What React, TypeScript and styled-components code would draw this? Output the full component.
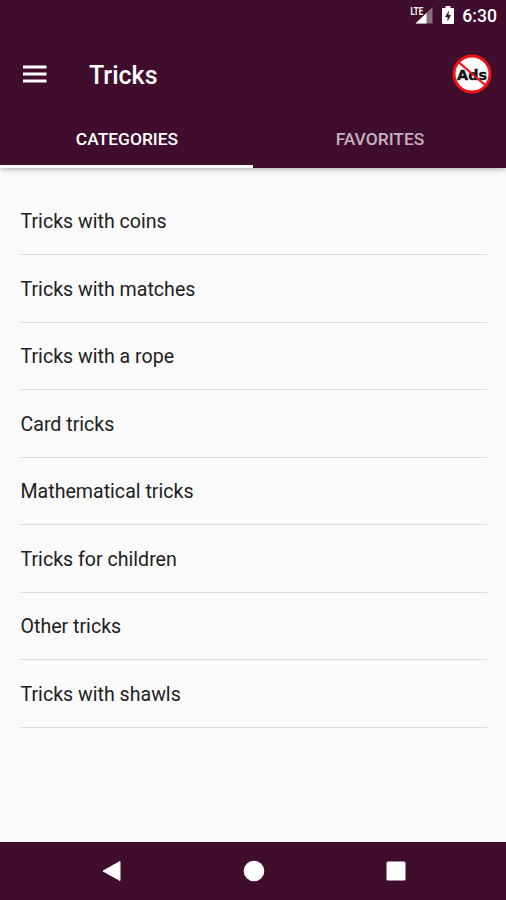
import React from "react";
import styled, { createGlobalStyle } from "styled-components";

const PLUM = "#400e2c";

const GlobalStyle = createGlobalStyle`
  * { box-sizing: border-box; }
  body { margin: 0; background: #fafafa; font-family: Roboto, "Liberation Sans", sans-serif; }
`;

const Screen = styled.div`
  display: flex;
  flex-direction: column;
  width: 506px;
  height: 900px;
  overflow: hidden;
  background: #fafafa;
`;

const Header = styled.header`
  flex: none;
  height: 168px;
  background: ${PLUM};
  box-shadow: 0 1px 6px rgba(0, 0, 0, 0.32);
`;

const StatusBar = styled.div`
  display: flex;
  align-items: center;
  justify-content: flex-end;
  height: 32px;
  padding-right: 9px;
  color: #fff;
`;

const SignalIcon = styled.svg`
  width: 24px;
  height: 22px;
  margin-right: 8px;
`;

const BatteryIcon = styled.svg`
  width: 12px;
  height: 18px;
  margin: -2px 8px 0 0;
`;

const Clock = styled.span`
  font-size: 17.6px;
  font-weight: 500;
  line-height: 32px;
`;

const Toolbar = styled.div`
  display: flex;
  align-items: center;
  height: 84px;
  padding: 0 14px 0 23px;
`;

const IconButton = styled.button`
  display: flex;
  padding: 0;
  border: 0;
  background: none;
  cursor: pointer;
`;

const Title = styled.h1`
  flex: 1;
  margin: 3px 0 0 42px;
  color: #fff;
  font-size: 25px;
  font-weight: 500;
  line-height: 32px;
`;

const Tabs = styled.nav`
  display: flex;
  height: 52px;
`;

const Tab = styled.button<{ $active?: boolean }>`
  flex: 1;
  padding: 0 0 3px 1px;
  border: 0;
  border-bottom: 3px solid ${(p) => (p.$active ? "#fff" : "transparent")};
  background: none;
  color: ${(p) => (p.$active ? "#fff" : "#c2b1bb")};
  font: 500 17.4px/44px Roboto, sans-serif;
  cursor: pointer;
`;

const List = styled.ul`
  flex: 1;
  margin: 0;
  padding: 19.5px 19px 0 20px;
  list-style: none;
`;

const Row = styled.li`
  display: flex;
  align-items: center;
  height: 67.5px;
  padding: 2px 0 0 0.5px;
  border-bottom: 1.5px solid #dcdcdc;
  color: #212121;
  font-size: 19.6px;
`;

const NavBar = styled.footer`
  display: grid;
  grid-template-columns: 142px 142px 142px;
  justify-content: center;
  align-items: center;
  justify-items: center;
  flex: none;
  height: 58px;
  padding: 0 0 1px 1px;
  background: ${PLUM};
  border-top: 1px solid #2b061d;
`;

const categories = [
  "Tricks with coins",
  "Tricks with matches",
  "Tricks with a rope",
  "Card tricks",
  "Mathematical tricks",
  "Tricks for children",
  "Other tricks",
  "Tricks with shawls",
];

export default function App() {
  return (
    <Screen>
      <GlobalStyle />
      <Header>
        <StatusBar>
          <SignalIcon viewBox="0 0 24 22">
            <path d="M22.500 2V18.500H5.500Z" fill="#8c6c7f" />
            <path d="M16.500 8V18.500H5.500Z" fill="#fff" />
            <path d="M0 0H14V10.500H0Z" fill={PLUM} />
            <text x="0.5" y="9.5" fill="#fff" fontSize="10" fontWeight="700" textLength="12.5" lengthAdjust="spacingAndGlyphs">LTE</text>
          </SignalIcon>
          <BatteryIcon viewBox="0 0 12 18">
            <path d="M3.500 0h5v2H11q1 0 1 1v14q0 1-1 1H1q-1 0-1-1V3q0-1 1-1h2.500Z" fill="#fff" />
            <path d="M7 4.500 3 11h2.500V15.500L9 9H6.500Z" fill={PLUM} />
          </BatteryIcon>
          <Clock>6:30</Clock>
        </StatusBar>
        <Toolbar>
          <IconButton aria-label="Menu">
            <svg width="24" height="18" viewBox="0 0 24 18">
              <path d="M0 0.500h23.500v3H0ZM0 7.500h23.500v3H0ZM0 14.500h23.500v3H0Z" fill="#fff" />
            </svg>
          </IconButton>
          <Title>Tricks</Title>
          <IconButton aria-label="Remove ads">
            <svg width="40" height="40" viewBox="0 0 40 40">
              <circle cx="20" cy="20" r="18" fill="#fff" stroke="#ef1017" strokeWidth="3" />
              <text x="5" y="25.500" fontFamily="DejaVu Sans" fontSize="14" fontWeight="700" textLength="30" lengthAdjust="spacingAndGlyphs" fill="#141414" stroke="#141414" strokeWidth="0.400">Ads</text>
              <path d="M7 8.500 33 31" stroke="#ef1017" strokeWidth="2.300" />
            </svg>
          </IconButton>
        </Toolbar>
        <Tabs>
          <Tab $active>CATEGORIES</Tab>
          <Tab>FAVORITES</Tab>
        </Tabs>
      </Header>
      <List>
        {categories.map((name) => (
          <Row key={name}>{name}</Row>
        ))}
      </List>
      <NavBar>
        <IconButton aria-label="Back">
          <svg width="20" height="24" viewBox="0 0 20 24">
            <path d="M18 2.500v19L1 12Z" fill="#fff" stroke="#fff" strokeLinejoin="round" />
          </svg>
        </IconButton>
        <IconButton aria-label="Home">
          <svg width="22" height="22" viewBox="0 0 22 22">
            <circle cx="11" cy="11" r="10.300" fill="#fff" />
          </svg>
        </IconButton>
        <IconButton aria-label="Overview">
          <svg width="20" height="20" viewBox="0 0 20 20">
            <rect x="0.500" y="0.500" width="19" height="19" rx="1.500" fill="#fff" />
          </svg>
        </IconButton>
      </NavBar>
    </Screen>
  );
}
